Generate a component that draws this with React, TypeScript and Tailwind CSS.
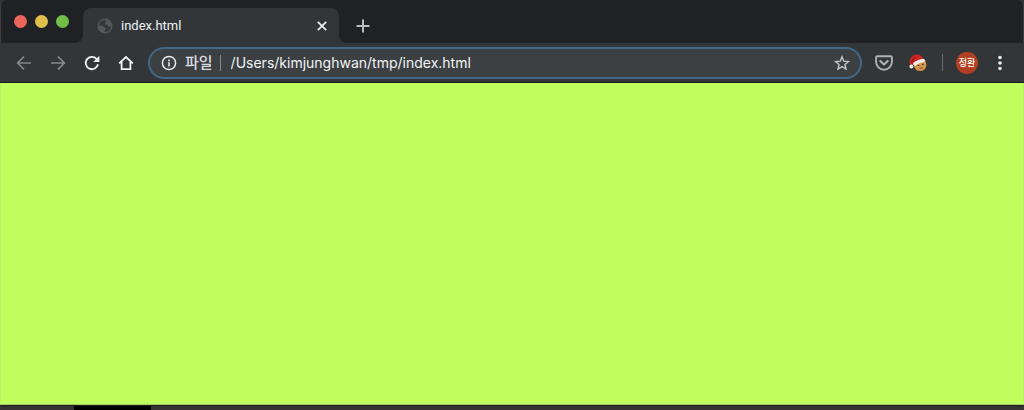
import { useState } from "react";
import type { ReactNode } from "react";

const FONT = "font-['Inter','Noto_Sans_CJK_KR',sans-serif]";

function ToolButton({ label, children }: { label: string; children: ReactNode }) {
  return (
    <button type="button" aria-label={label} className="flex h-8 w-[34px] shrink-0 items-center justify-center">
      {children}
    </button>
  );
}

function Arrow({ flip = false }: { flip?: boolean }) {
  return (
    <svg viewBox="0 0 16 16" className={flip ? "size-4 rotate-180" : "size-4"} fill="none" stroke="#85888b" strokeWidth="1.6">
      <path d="M15 8H2M8 1.6 1.6 8 8 14.4" />
    </svg>
  );
}

function TabFoot({ mirrored = false }: { mirrored?: boolean }) {
  return (
    <svg viewBox="0 0 8 8" className={mirrored ? "size-2 shrink-0 -scale-x-100" : "size-2 shrink-0"} fill="#323639">
      <path d="M8 0v8H0a8 8 0 0 0 8-8Z" />
    </svg>
  );
}

function TabStrip() {
  return (
    <header className="flex h-[43px] shrink-0 items-end rounded-t-md border-x border-[#3c3f42] bg-[#202124]">
      <div className="flex h-[43px] w-[74px] shrink-0 items-center gap-2 pl-[13px]">
        <button type="button" aria-label="닫기" className="size-[13px] rounded-full bg-[#ed655a]" />
        <button type="button" aria-label="최소화" className="size-[13px] rounded-full bg-[#e0c04c]" />
        <button type="button" aria-label="확대" className="size-[13px] rounded-full bg-[#72be47]" />
      </div>
      <TabFoot />
      <div className="flex h-[35px] w-64 items-center rounded-t-lg bg-[#323639] pl-[14px] pr-[11px]">
        <svg viewBox="0 0 16 16" className="size-4 shrink-0">
          <circle cx="8" cy="8" r="7.5" fill="#55595d" />
          <path
            d="M8.8 1.9C5.3 1.3 2 4.2 1.9 7.4c1.6.2 2.8.2 3.9.7 1 .5.9 1.4 2 1.6.9.2 1.3.5 1.2 1.4-.1.7-1.1.8-1.4 1.3-.3.6-.1 1.1-.3 1.6 3.8.5 6.8-2.5 6.8-6-1 .7-2 1-2.7.4-.7-.5-.4-1.3-1.2-1.7-.8-.3-2.2.1-2.4-.8-.2-.8.8-.9 1.1-1.5.3-.7-.4-1.3-.1-2.5Z"
            fill="#34383b"
          />
        </svg>
        <span className="ml-2 flex-1 font-['Roboto','Noto_Sans_CJK_KR',sans-serif] text-[13px] leading-4 text-[#f1f3f4]">
          index.html
        </span>
        <button type="button" aria-label="탭 닫기" className="flex size-3 items-center justify-center">
          <svg viewBox="0 0 10 10" className="size-[10px]" stroke="#eceeef" strokeWidth="1.7">
            <path d="m.8.8 8.4 8.4M9.2.8.8 9.2" />
          </svg>
        </button>
      </div>
      <TabFoot mirrored />
      <button type="button" aria-label="새 탭" className="flex h-[35px] w-8 items-center justify-center">
        <svg viewBox="0 0 14 14" className="size-[14px]" stroke="#b9bbbd" strokeWidth="2">
          <path d="M7 .5v13M.5 7h13" />
        </svg>
      </button>
    </header>
  );
}

function AddressBar() {
  const [url, setUrl] = useState("/Users/kimjunghwan/tmp/index.html");
  return (
    <div className="mx-[5px] flex h-8 min-w-0 flex-1 items-center rounded-full border-2 border-[#436789] bg-[#3c4043] pl-[11px] pr-[10px]">
      <svg viewBox="0 0 16 16" className="size-4 shrink-0" fill="none" stroke="#e8eaed">
        <circle cx="8" cy="8" r="6.6" strokeWidth="1.5" />
        <path d="M8 7.2v4.2M8 4.5v1.7" strokeWidth="1.6" />
      </svg>
      <label htmlFor="address" className="ml-2 shrink-0 text-[15px] font-medium leading-5 text-[#dadce0]">
        파일
      </label>
      <span className="ml-[7px] h-4 w-px shrink-0 bg-[#85888b]" />
      <input
        id="address"
        type="text"
        value={url}
        onChange={(event) => setUrl(event.target.value)}
        className="ml-[10px] min-w-0 flex-1 bg-transparent text-[14px] leading-5 text-[#f1f3f4] outline-none"
      />
      <button type="button" aria-label="북마크" className="shrink-0">
        <svg viewBox="0 0 16 16" className="size-4" fill="none" stroke="#c3c6c9" strokeWidth="1.4">
          <path d="m8 1.8 1.7 4.3 4.8.4-3.6 3 1.1 4.6L8 11.6l-4 2.5 1.1-4.6-3.6-3 4.8-.4Z" />
        </svg>
      </button>
    </div>
  );
}

function SantaCookie() {
  return (
    <svg viewBox="0 0 18 18" className="size-[18px]">
      <circle cx="11.2" cy="10.8" r="6.3" fill="#d29a4c" />
      <path d="M6 13.6a6.3 6.3 0 0 0 11-1 7 7 0 0 1-11 1Z" fill="#b87a35" />
      <path d="M8.5 11.4h1.7M13 10.4h1.6" stroke="#513016" strokeWidth="1.1" />
      <path d="M10.3 13.9c1.3.5 2.5.2 3.4-.6" stroke="#744015" strokeWidth=".8" fill="none" />
      <path d="M1 11.5C-.2 5.5 2.2 1 7.3.6c3.5-.2 6 1.6 7.3 4.8L4.5 10.3 3 12Z" fill="#cb2424" />
      <path d="M2.2 9.3C2.5 5.8 4 3.4 7 2.4 4.8 4.8 4.1 7.1 4 10Z" fill="#98191d" />
      <path d="M5.8 9.8c2-.8 4-3.2 8.4-3.3" stroke="#f4eeea" strokeWidth="3.4" strokeLinecap="round" fill="none" />
      <circle cx="2.4" cy="12.6" r="2" fill="#f4eeea" />
    </svg>
  );
}

function Toolbar() {
  return (
    <nav className="flex h-10 shrink-0 items-center border-b border-[#181c16] bg-[#323639] pl-[7px] pr-2">
      <ToolButton label="뒤로">
        <Arrow />
      </ToolButton>
      <ToolButton label="앞으로">
        <Arrow flip />
      </ToolButton>
      <ToolButton label="새로고침">
        <svg viewBox="0 0 16 16" className="size-4" fill="none" stroke="#f1f3f4" strokeWidth="1.8">
          <path d="M14 9.3A6.2 6.2 0 1 1 12.5 3.8L14 5.4" />
          <path d="M15.4.8v6.1H9.3Z" fill="#f1f3f4" stroke="none" />
        </svg>
      </ToolButton>
      <ToolButton label="홈">
        <svg viewBox="0 0 16 16" className="size-4" fill="none" stroke="#f1f3f4" strokeWidth="1.8">
          <path d="M1.2 8.4 8 2l6.8 6.4M3.6 7v7.1h8.8V7" />
        </svg>
      </ToolButton>
      <AddressBar />
      <ToolButton label="Pocket">
        <svg viewBox="0 0 18 16" className="h-4 w-[18px]" fill="none" stroke="#aeb1b4" strokeWidth="1.9" strokeLinejoin="round">
          <path d="M2.3 1.2h13.4q1.2 0 1.2 1.2v4.4a7.9 7.9 0 0 1-15.8 0V2.4q0-1.2 1.2-1.2Z" />
          <path d="m5.3 6 3.7 3.5L12.7 6" strokeWidth="2.2" strokeLinecap="round" />
        </svg>
      </ToolButton>
      <ToolButton label="확장 프로그램">
        <SantaCookie />
      </ToolButton>
      <span className="mx-[7px] h-[17px] w-px shrink-0 bg-[#66696c]" />
      <button type="button" className="mx-[6px] flex size-[22px] shrink-0 items-center justify-center rounded-full bg-[#b33f22] text-[9px] font-medium leading-3 whitespace-nowrap text-white">
        정환
      </button>
      <button type="button" aria-label="메뉴" className="flex size-8 shrink-0 items-center justify-center">
        <svg viewBox="0 0 4 16" className="h-4 w-1" fill="#f1f3f4">
          <circle cx="2" cy="2.5" r="1.8" />
          <circle cx="2" cy="8" r="1.8" />
          <circle cx="2" cy="13.5" r="1.8" />
        </svg>
      </button>
    </nav>
  );
}

export default function App() {
  return (
    <div className={`flex min-h-screen flex-col bg-[#343232] ${FONT}`}>
      <TabStrip />
      <Toolbar />
      <main className="flex-1 border-x border-b border-x-[#b9f26c] border-b-[#a9c477] bg-[#c0fe5d]" />
      <footer className="flex h-[5px] shrink-0 border-t border-[#1c210f]">
        <span className="ml-[74px] w-[77px] bg-black" />
      </footer>
    </div>
  );
}
